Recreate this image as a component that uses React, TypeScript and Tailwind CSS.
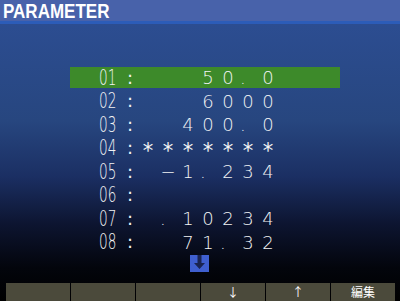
import React from "react";

const rows: { label: string; value: string }[] = [
  { label: "01", value: "50.0" },
  { label: "02", value: "6000" },
  { label: "03", value: "400.0" },
  { label: "04", value: "*******" },
  { label: "05", value: "−1.234" },
  { label: "06", value: "" },
  { label: "07", value: ".10234" },
  { label: "08", value: "71.32" },
];

function Value({ text }: { text: string }) {
  return (
    <div className="flex justify-end w-[150px]">
      {text.split("").map((c, i) =>
        c === "." ? (
          <span key={i} className="w-[20px] text-left pl-[2px]">
            .
          </span>
        ) : c === "*" ? (
          <span key={i} className="w-[20px] text-center font-normal text-[21px] leading-[23.5px] translate-y-[3px]">
            *
          </span>
        ) : (
          <span key={i} className="w-[20px] text-center">
            {c}
          </span>
        )
      )}
    </div>
  );
}

export default function App() {
  return (
    <div className="w-[400px] h-[301px] flex flex-col bg-black overflow-hidden">
      <div className="h-[21px] bg-[#4862aa] flex items-center pl-[3px] shrink-0">
        <span
          className="inline-block origin-left scale-x-[0.81] text-white font-bold text-[21px] leading-none"
          style={{ fontFamily: '"Liberation Sans", Arial, sans-serif' }}
        >
          PARAMETER
        </span>
      </div>
      <div className="h-[3px] bg-[#2c5cb8] shrink-0" />
      <div className="flex-1 flex flex-col bg-[linear-gradient(to_bottom,#2c4d91_0%,#27467f_35%,#1b2f63_55%,#0d1531_72%,#03050c_88%,#000_100%)]">
        <div
          className="flex flex-col pt-[42px] ml-[70px] w-[270px] text-[#f2f3f4] font-extralight text-[18px]"
          style={{ fontFamily: '"DejaVu Sans", sans-serif' }}
        >
          {rows.map((r, i) => (
            <div
              key={r.label}
              className="h-[23.5px] flex items-center relative"
            >
              {i === 0 && (
                <div className="absolute left-0 right-0 top-[1px] h-[21px] bg-[#3d8a2a]" />
              )}
              <div className="relative flex items-center w-[28px] ml-[29px]">
                <span className="inline-block origin-left scale-x-[0.62] text-[22px] leading-none">
                  {r.label}
                </span>
              </div>
              <span className="relative w-[8px] leading-none font-normal">:</span>
              <div className="relative ml-[-7px]">
                <Value text={r.value} />
              </div>
            </div>
          ))}
        </div>
        <div className="flex justify-center mt-[1px] pr-[1px]">
          <svg width="19" height="17" viewBox="0 0 19 17">
            <rect x="0" y="0" width="19" height="17" fill="#3f5fcf" />
            <path d="M7.5 0 H11.5 V8 H15 L9.5 14 L4 8 H7.5 Z" fill="#1a2450" />
          </svg>
        </div>
        <div className="flex-1" />
        <div className="h-[18px] flex gap-[1px] ml-[6px] w-[389px]">
          {["", "", "", "↓", "↑", "編集"].map((t, i) => (
            <div
              key={i}
              className="flex-1 bg-[#4b4a3b] flex items-center justify-center text-white text-[12px] leading-none"
              style={{ fontFamily: '"Noto Sans CJK JP", "Noto Sans", sans-serif' }}
            >
              {t}
            </div>
          ))}
        </div>
      </div>
    </div>
  );
}
